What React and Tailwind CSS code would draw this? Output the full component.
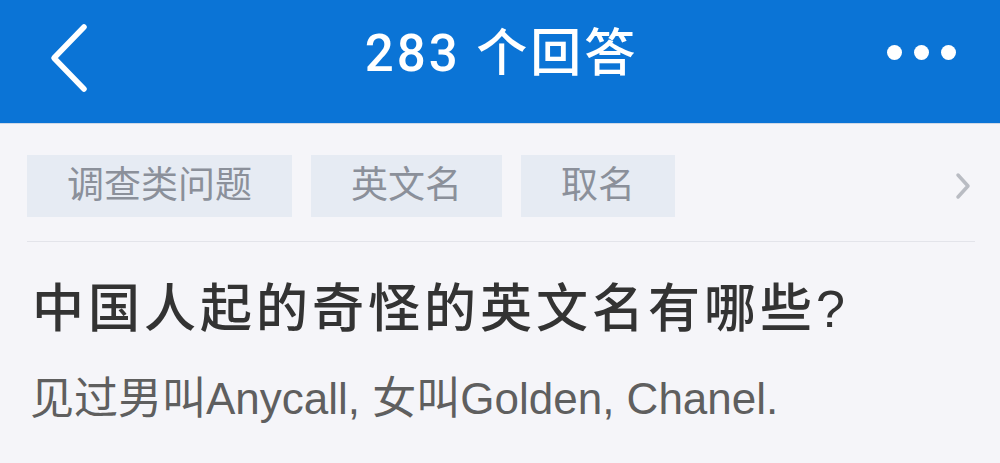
import React from "react";

const tags = ["调查类问题", "英文名", "取名"];

export default function App() {
  return (
    <div className="w-[1000px] h-[463px] overflow-hidden bg-[#f5f5f9] font-['Liberation_Sans','Noto_Sans_CJK_SC',sans-serif]">
      {/* 顶栏 */}
      <div className="h-[124px] bg-[#0b74d6] flex items-center justify-between px-[44px] border-b border-[#cfd8e6]">
        <svg width="48" height="72" viewBox="0 0 48 72" className="-mt-[10px]">
          <path d="M40 6 L10 37 L40 68" fill="none" stroke="#fff" strokeWidth="5.5" strokeLinecap="round" strokeLinejoin="round" />
        </svg>
        <div className="text-white text-[51px] font-['Roboto','Noto_Sans_CJK_SC',sans-serif] font-medium tracking-[3px] -mt-[14px] ml-[24px]">283 个回答</div>
        <div className="flex gap-[12px] -mt-[18px]">
          <span className="w-[15px] h-[15px] rounded-full bg-white" />
          <span className="w-[15px] h-[15px] rounded-full bg-white" />
          <span className="w-[15px] h-[15px] rounded-full bg-white" />
        </div>
      </div>

      {/* 标签 */}
      <div className="px-[27px] pt-[31px]">
        <div className="flex items-center gap-[19px] h-[62px]">
          {tags.map((t) => (
            <div key={t} className="h-[62px] px-[40px] bg-[#e6ebf3] text-[#8b909a] text-[37px] flex items-center">
              {t}
            </div>
          ))}
          <div className="flex-1" />
          <svg width="16" height="28" viewBox="0 0 16 28" className="mr-[2px]">
            <path d="M3 3 L13 14 L3 25" fill="none" stroke="#b9bcc3" strokeWidth="3.5" strokeLinecap="round" strokeLinejoin="round" />
          </svg>
        </div>
        <div className="mt-[24px] h-px bg-[#e3e4ea] mr-[-2px]" />
      </div>

      {/* 问题 */}
      <div className="px-[32px] pt-[41px]">
        <h1 className="text-[52px] leading-none text-[#333] font-medium tracking-[4px]">中国人起的奇怪的英文名有哪些?</h1>
        <p className="mt-[42px] -ml-[2px] text-[44px] leading-none text-[#5f5f5f] tracking-[0px]">见过男叫Anycall, 女叫Golden, Chanel.</p>
      </div>
    </div>
  );
}
